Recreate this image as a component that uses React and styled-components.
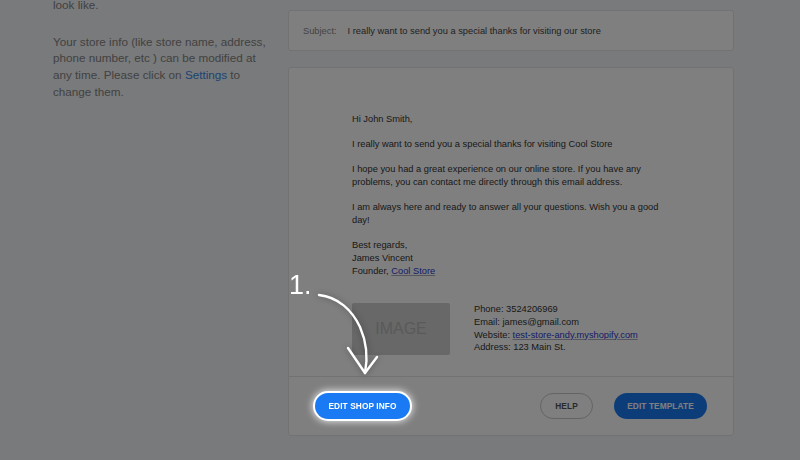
import React from 'react';
import styled, { createGlobalStyle } from 'styled-components';

const GlobalStyle = createGlobalStyle`
  html, body {
    margin: 0;
    padding: 0;
    background: #f3f5f7;
    font-family: "Liberation Sans", Arial, sans-serif;
    overflow: hidden;
  }
`;

const Page = styled.div`
  width: 800px;
  height: 460px;
  display: flex;
  gap: 21px;
  padding-left: 53px;
  box-sizing: border-box;
  overflow: hidden;
`;

const Aside = styled.div`
  width: 214px;
  margin-top: -3px;
  font-size: 11.7px;
  line-height: 16.7px;
  color: #848484;
`;

const Para = styled.p`
  margin: 0 0 20px;
`;

const Link = styled.a`
  color: #3a86e8;
  text-decoration: none;
`;

const Main = styled.div`
  width: 446px;
  padding-top: 10px;
  display: flex;
  flex-direction: column;
  gap: 16px;
`;

const Card = styled.div`
  background: #fff;
  border: 1px solid #e2e4e6;
  border-radius: 3px;
  box-sizing: border-box;
`;

const SubjectCard = styled(Card)`
  height: 41px;
  display: flex;
  align-items: center;
  padding-left: 14px;
  font-size: 9.3px;
  color: #444;
`;

const SubjectLabel = styled.span`
  color: #888;
  margin-right: 11px;
`;

const MailBody = styled.div`
  padding: 45px 0 21px 63px;
  font-size: 9.3px;
  line-height: 12.7px;
  color: #333;
`;

const MailPara = styled.p`
  margin: 0 0 ${p => (p.$last ? 0 : 12.5)}px;
  width: 320px;
`;

const MailLink = styled.a`
  color: #2a3ad0;
  text-decoration: underline;
  text-decoration-color: #aab;
`;

const Signature = styled.div`
  display: flex;
  gap: 24px;
  margin-top: 26px;
`;

const ImageBox = styled.div`
  width: 98px;
  height: 52px;
  border-radius: 2px;
  background: #d0d0d0;
  color: #b4b4b4;
  font-size: 16px;
  display: flex;
  align-items: center;
  justify-content: center;
`;

const Contact = styled.div`
  line-height: 12.6px;
`;

const Footer = styled.div`
  border-top: 1px solid #e2e4e6;
  height: 58px;
  display: flex;
  align-items: center;
  padding: 0 26px;
  gap: 21px;
`;

const Button = styled.button`
  width: ${p => p.$w}px;
  height: 26px;
  padding: 0;
  border-radius: 13px;
  font-family: "Liberation Sans", Arial, sans-serif;
  font-size: 8.3px;
  font-weight: bold;
  letter-spacing: 0.1px;
  white-space: nowrap;
  border: ${p => (p.$outline ? '1px solid #c8c8c8' : 'none')};
  background: ${p => (p.$outline ? 'transparent' : '#1a7af3')};
  color: ${p => (p.$outline ? '#555' : '#fff')};
  cursor: pointer;
`;

const HighlightButton = styled(Button)`
  position: relative;
  z-index: 3;
  box-shadow: 0 0 0 2px #fff, 0 0 7px 3px rgba(255, 255, 255, 0.75);
  margin-right: auto;
`;

const Dim = styled.div`
  position: fixed;
  inset: 0;
  background: rgba(0, 0, 0, 0.5);
  z-index: 2;
`;

const Step = styled.div`
  position: absolute;
  left: 289px;
  top: 270px;
  z-index: 4;
  color: #fff;
  font-size: 27px;
  line-height: 30px;
`;

const Arrow = styled.svg`
  position: absolute;
  left: 0;
  top: 0;
  z-index: 4;
  filter: drop-shadow(0 0 3px rgba(0, 0, 0, 0.35));
`;

export default function App() {
  return (
    <>
      <GlobalStyle />
      <Page>
        <Aside>
          <Para>look like.</Para>
          <Para>
            Your store info (like store name, address, phone number, etc ) can be modified at any time.
            Please click on <Link href="#">Settings</Link> to change them.
          </Para>
        </Aside>
        <Main>
          <SubjectCard>
            <SubjectLabel>Subject:</SubjectLabel>
            I really want to send you a special thanks for visiting our store
          </SubjectCard>
          <Card>
            <MailBody>
              <MailPara>Hi John Smith,</MailPara>
              <MailPara>I really want to send you a special thanks for visiting Cool Store</MailPara>
              <MailPara>
                I hope you had a great experience on our online store. If you have any problems, you can
                contact me directly through this email address.
              </MailPara>
              <MailPara>
                I am always here and ready to answer all your questions. Wish you a good day!
              </MailPara>
              <MailPara $last>
                Best regards,
                <br />
                James Vincent
                <br />
                Founder, <MailLink href="#">Cool Store</MailLink>
              </MailPara>
              <Signature>
                <ImageBox>IMAGE</ImageBox>
                <Contact>
                  Phone: 3524206969
                  <br />
                  Email: james@gmail.com
                  <br />
                  Website: <MailLink href="#">test-store-andy.myshopify.com</MailLink>
                  <br />
                  Address: 123 Main St.
                </Contact>
              </Signature>
            </MailBody>
            <Footer>
              <HighlightButton $w={95}>EDIT SHOP INFO</HighlightButton>
              <Button $outline $w={53}>HELP</Button>
              <Button $w={93}>EDIT TEMPLATE</Button>
            </Footer>
          </Card>
        </Main>
      </Page>
      <Dim />
      <Step>1.</Step>
      <Arrow width="800" height="460" viewBox="0 0 800 460">
        <path
          d="M319 295 C 338 297, 352 310, 360 327 C 367 343, 368 358, 365 373"
          fill="none"
          stroke="#fff"
          strokeWidth="2.4"
          strokeLinecap="round"
        />
        <path
          d="M348 348 L365 373 L377 357"
          fill="none"
          stroke="#fff"
          strokeWidth="2.4"
          strokeLinecap="round"
          strokeLinejoin="round"
        />
      </Arrow>
    </>
  );
}
